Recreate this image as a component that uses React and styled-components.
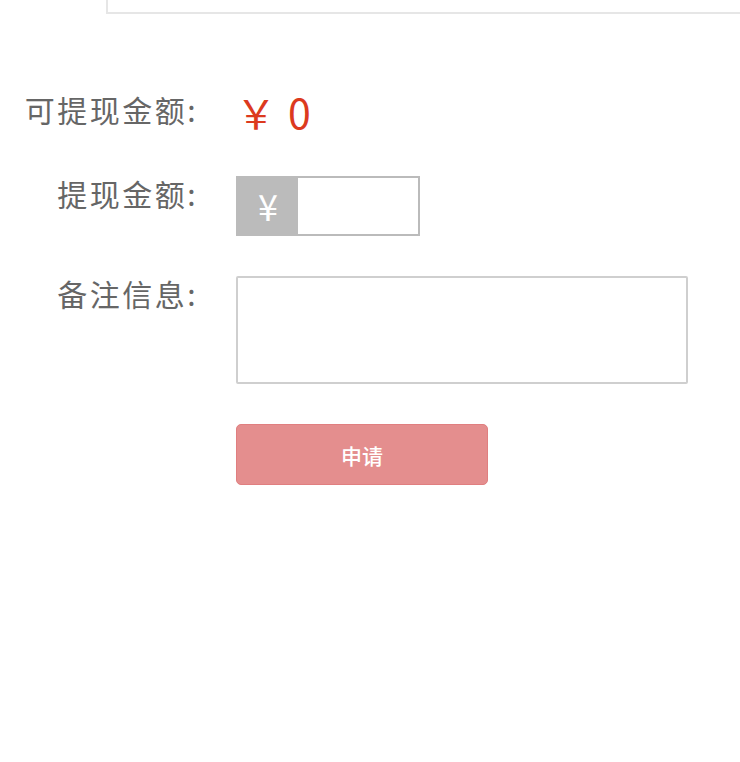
import React from 'react'
import styled, { createGlobalStyle } from 'styled-components'

const GlobalStyle = createGlobalStyle`
  html, body {
    margin: 0;
    padding: 0;
    background: #fff;
    font-family: "Noto Sans CJK SC", "Noto Sans", sans-serif;
  }
`

const Page = styled.div`
  width: 740px;
  height: 762px;
  overflow: hidden;
`

const TopPanel = styled.div`
  margin-left: 106px;
  height: 12px;
  border-left: 2px solid #e6e6e6;
  border-bottom: 2px solid #e6e6e6;
`

const Form = styled.form`
  margin-top: 74px;
  display: flex;
  flex-direction: column;
  gap: 40px;
`

const Row = styled.div`
  display: grid;
  grid-template-columns: 198px 1fr;
  column-gap: 38px;
  align-items: start;
  min-height: ${p => p.$minH || 'auto'};
`

const Label = styled.label`
  text-align: right;
  font-size: 30px;
  line-height: ${p => p.$lh || '34px'};
  color: #666;
  white-space: nowrap;
  letter-spacing: 2.5px;
`

const Amount = styled.div`
  font-size: 40px;
  line-height: 46px;
  color: #dc3a1e;
  white-space: nowrap;
`

const Zero = styled.span`
  margin-left: 12px;
  font-size: 41px;
`

const InputGroup = styled.div`
  display: flex;
  width: 184px;
  height: 60px;
  box-sizing: border-box;
  border: 2px solid #bbb;
`

const Addon = styled.span`
  width: 60px;
  display: flex;
  align-items: center;
  justify-content: center;
  background: #bbb;
  color: #fff;
  font-size: 36px;
  padding-bottom: 2px;
  box-sizing: border-box;
`

const Input = styled.input`
  flex: 1;
  min-width: 0;
  border: none;
  outline: none;
  padding: 0 8px;
  font-size: 20px;
  background: #fff;
`

const Textarea = styled.textarea`
  display: block;
  width: 452px;
  height: 108px;
  box-sizing: border-box;
  border: 2px solid #cfcfcf;
  border-radius: 2px;
  resize: none;
  outline: none;
  padding: 6px 10px;
  font-family: inherit;
  font-size: 18px;
  margin: 0;
`

const SubmitButton = styled.button`
  width: 252px;
  height: 61px;
  box-sizing: border-box;
  background: #e48e8e;
  border: 1px solid #e07f80;
  border-radius: 5px;
  color: #fff;
  font-family: inherit;
  font-size: 21px;
  font-weight: 500;
  cursor: pointer;
  padding: 0;
`

const App = () => {
  return (
    <Page>
      <GlobalStyle />
      <TopPanel />
      <Form onSubmit={e => e.preventDefault()}>
        <Row $minH="48px">
          <Label $lh="43px">可提现金额:</Label>
          <Amount>￥<Zero>0</Zero></Amount>
        </Row>
        <Row>
          <Label>提现金额:</Label>
          <InputGroup>
            <Addon>¥</Addon>
            <Input type="text" />
          </InputGroup>
        </Row>
        <Row>
          <Label>备注信息:</Label>
          <Textarea />
        </Row>
        <Row>
          <span />
          <div>
            <SubmitButton type="submit">申请</SubmitButton>
          </div>
        </Row>
      </Form>
    </Page>
  )
}

export default App
